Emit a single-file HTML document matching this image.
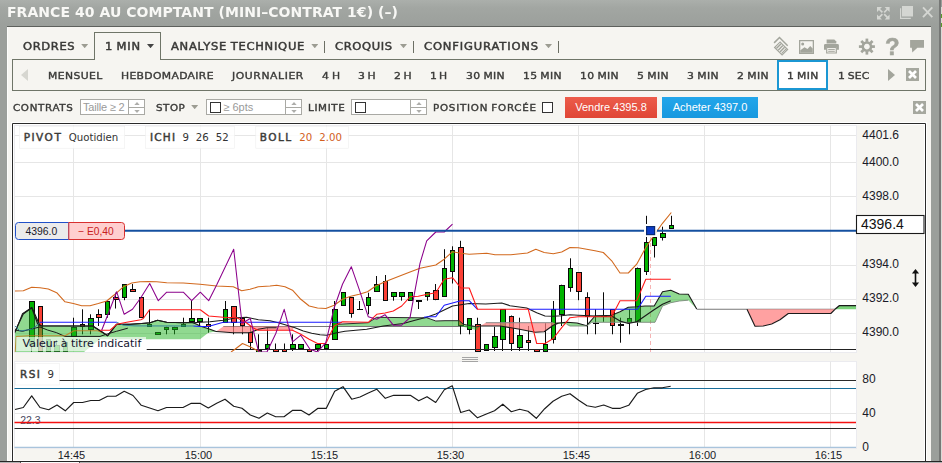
<!DOCTYPE html><html lang="fr"><head><meta charset="utf-8"><title>FRANCE 40 AU COMPTANT</title>
<style>

html,body{margin:0;padding:0}
body{width:942px;height:463px;overflow:hidden;position:relative;background:#9b9f9b;font-family:"Liberation Sans",sans-serif}
.abs{position:absolute}
#titlebar{position:absolute;left:0;top:0;width:939px;height:27px;background:linear-gradient(#abafab 0,#a2a6a2 8px,#9b9f9b 27px)}
#title{position:absolute;left:7.3px;top:2.6px;font-family:"DejaVu Sans","Liberation Sans",sans-serif;font-weight:700;font-size:14px;line-height:18px;color:#f8f8f5;white-space:nowrap;will-change:transform;letter-spacing:0.05px}
#content{position:absolute;left:7px;top:27px;width:924px;height:434px;background:#f6f5f1}
#ctop{position:absolute;left:7px;top:26px;width:924px;height:1px;background:#5d605c}
.lb{position:absolute;font-family:"DejaVu Sans","Liberation Sans",sans-serif;font-weight:400;-webkit-text-stroke:0.45px currentColor;white-space:nowrap;will-change:transform;transform:scaleX(1.10);transform-origin:0 0}
.ar{position:absolute;width:7px;height:4.2px;background:#9c9c92;clip-path:polygon(0 0,100% 0,50% 100%)}
.sep{position:absolute;width:1px;height:12px;background:#6c6f64;top:41px}
.inp{position:absolute;top:99px;height:16px;background:#fff;border:1px solid #a9a9a4;box-sizing:border-box}
.inp i{position:absolute;top:0;bottom:0;width:1px;background:#a9a9a4}
.inp b{position:absolute;top:7px;height:1px;right:0;background:#a9a9a4}
.ph{position:absolute;font-size:12px;line-height:14px;color:#9a9a9a;top:99.6px;white-space:nowrap}
.cb{position:absolute;width:11px;height:11px;box-sizing:border-box;border:1px solid #333;background:#fff;top:102px}
.btn{position:absolute;top:97px;height:21px;color:#fff;font-size:11px;line-height:21px;text-align:center;white-space:nowrap}
.xb{position:absolute;width:13px;height:13px;background:#a6a89f}
.ax{position:absolute;font-size:12px;line-height:14px;color:#1a1a2a;white-space:nowrap}
.tm{position:absolute;font-size:11px;line-height:12px;color:#1a1a2a;top:449px;white-space:nowrap}

</style></head><body>
<div id="titlebar"></div>
<div id="title">FRANCE 40 AU COMPTANT (MINI–CONTRAT 1€) (–)</div>
<div class="abs" style="left:939px;top:0;width:2px;height:463px;background:#767876"></div>
<div class="abs" style="left:941px;top:7px;width:1px;height:456px;background:#d9dbd6"></div>
<div class="abs" style="left:941px;top:14px;width:1px;height:4px;background:#5a9a2a"></div>
<div class="abs" style="left:941px;top:23px;width:1px;height:4px;background:#5a9a2a"></div>
<div id="content"></div><div id="ctop"></div>
<div class="abs" style="left:7px;top:27px;width:1px;height:434px;background:#fdfdfb"></div>
<svg class="abs" style="left:870px;top:0" width="70" height="26" viewBox="870 0 70 26">
<g fill="#d4d6d2" stroke="none">
<path d="M877 7h5L877 12zM889.6 7v5L884.6 7zM877 19.6v-5L882 19.6zM889.6 19.6h-5L889.6 14.6z"/>
<path d="M879 9l3.4 3.4M887.6 9l-3.4 3.4M879 17.6l3.4-3.4M887.6 17.6l-3.4-3.4" stroke="#d4d6d2" stroke-width="1.7" fill="none"/>
<rect x="902" y="6" width="11" height="10.5"/>
<path d="M900 8.3h1.2v9.5h9.6v1.2H900z"/>
</g>
<path d="M923 7.3l9.3 9.8M932.3 7.3l-9.3 9.8" stroke="#d4d6d2" stroke-width="1.9" fill="none"/>
</svg>
<div class="abs" style="left:12px;top:59px;width:914px;height:32px;box-sizing:border-box;border:1px solid #6f7568;background:#f6f5f1"></div>
<div class="abs" style="left:94px;top:32px;width:67px;height:28px;box-sizing:border-box;border:1px solid #6f7568;border-bottom:none;background:#f6f5f1"></div>
<span class="lb" style="left:22.8px;top:41.7px;font-size:10.0px;line-height:10.0px;letter-spacing:0.56px;word-spacing:0px;color:#3a3a38;transform:scaleX(1.15);-webkit-text-stroke-width:0.45px">ORDRES</span>
<div class="ar" style="left:81.2px;top:44px"></div>
<span class="lb" style="left:104.7px;top:41.7px;font-size:10.0px;line-height:10.0px;letter-spacing:0.63px;word-spacing:-0.7px;color:#3a3a38;transform:scaleX(1.15);-webkit-text-stroke-width:0.45px">1 MIN</span>
<div class="ar" style="left:147px;top:44px;background:#444"></div>
<span class="lb" style="left:170.8px;top:41.7px;font-size:10.0px;line-height:10.0px;letter-spacing:0.65px;word-spacing:-0.7px;color:#3a3a38;transform:scaleX(1.15);-webkit-text-stroke-width:0.45px">ANALYSE TECHNIQUE</span>
<div class="ar" style="left:311.3px;top:44px"></div><div class="sep" style="left:324px"></div>
<span class="lb" style="left:335.3px;top:41.7px;font-size:10.0px;line-height:10.0px;letter-spacing:0.57px;word-spacing:0px;color:#3a3a38;transform:scaleX(1.15);-webkit-text-stroke-width:0.45px">CROQUIS</span>
<div class="ar" style="left:400px;top:44px"></div><div class="sep" style="left:413px"></div>
<span class="lb" style="left:424.2px;top:41.7px;font-size:10.0px;line-height:10.0px;letter-spacing:0.75px;word-spacing:0px;color:#3a3a38;transform:scaleX(1.15);-webkit-text-stroke-width:0.45px">CONFIGURATIONS</span>
<div class="ar" style="left:545px;top:44px"></div><div class="sep" style="left:558px"></div>
<svg class="abs" style="left:770px;top:34px" width="160" height="24" viewBox="770 34 160 24">
<g fill="#a3a59c">
<!-- layers -->
<path d="M774.1 42.9L779.5 37.5L787.7 45.7" fill="none" stroke="#a3a59c" stroke-width="1.5"/>
<g transform="translate(781.1 48.5) rotate(45)">
<path fill-rule="evenodd" d="M-5.9-4.5H5.9V4.5H-5.9zM-4.7-3.3V3.3H4.7V-3.3z"/>
<rect x="-4.1" y="-3.3" width="1.5" height="6.6"/><rect x="-1.6" y="-3.3" width="1.5" height="6.6"/><rect x="0.9" y="-3.3" width="1.5" height="6.6"/><rect x="3.3" y="-3.3" width="1.2" height="6.6"/>
</g>
<!-- image -->
<path d="M799 40h15v14h-15zM800.3 41.3v11.4h12.4V41.3z" fill-rule="evenodd"/>
<circle cx="802.7" cy="43.9" r="1.5"/>
<path d="M800.3 52.8v-2.5l4.2-3 3 1.7 2.7-3 2.5 2.6v4.2z"/>
<!-- printer -->
<path d="M826.6 39.5h7.7l2 2V43.4h-9.7z"/>
<path d="M824 45.3q0-1.4 1.4-1.4h12.1q1.4 0 1.4 1.4v4.5h-2v-2.9h-10.9v2.9H824z"/>
<path d="M826.1 46.9h10.8v6.7h-10.8zM827.3 48.1v4.3h8.4v-4.3z" fill-rule="evenodd"/>
<rect x="828.2" y="48.9" width="6.6" height="1"/><rect x="828.2" y="50.8" width="6.6" height="1"/>
<!-- bubble -->
<path d="M910.1 40h13.9v7.7h-6.6l-5.1 4.7-.5-4.7h-1.7z"/>
</g>
<!-- gear -->
<g transform="translate(866.9 46.6)" fill="#a3a59c">
<path fill-rule="evenodd" d="M0-5.4a5.4 5.4 0 1 0 .001 0zM0-2.9a2.9 2.9 0 1 1-.001 0z"/>
<g id="t"><rect x="-1.35" y="-8" width="2.7" height="3.2"/></g>
<use href="#t" transform="rotate(45)"/><use href="#t" transform="rotate(90)"/><use href="#t" transform="rotate(135)"/>
<use href="#t" transform="rotate(180)"/><use href="#t" transform="rotate(225)"/><use href="#t" transform="rotate(270)"/><use href="#t" transform="rotate(315)"/>
</g>

</svg>
<span class="abs" style="left:884.6px;top:34.6px;font-family:'Liberation Sans',sans-serif;font-weight:700;font-size:24px;line-height:24px;color:#a3a59c;-webkit-text-stroke:0.5px #a3a59c;will-change:transform">?</span>
<div class="abs" style="left:21px;top:68.5px;width:0;height:0;border-top:6.5px solid transparent;border-bottom:6.5px solid transparent;border-right:7px solid #d6d6d0"></div>
<span class="lb" style="left:48.3px;top:71.2px;font-size:9.3px;line-height:9.3px;letter-spacing:0.35px;word-spacing:0px;color:#3a3a38;transform:scaleX(1.16);-webkit-text-stroke-width:0.36px">MENSUEL</span>
<span class="lb" style="left:120.8px;top:71.2px;font-size:9.3px;line-height:9.3px;letter-spacing:0.29px;word-spacing:0px;color:#3a3a38;transform:scaleX(1.16);-webkit-text-stroke-width:0.36px">HEBDOMADAIRE</span>
<span class="lb" style="left:231.7px;top:71.2px;font-size:9.3px;line-height:9.3px;letter-spacing:0.51px;word-spacing:0px;color:#3a3a38;transform:scaleX(1.16);-webkit-text-stroke-width:0.36px">JOURNALIER</span>
<span class="lb" style="left:321.7px;top:71.2px;font-size:9.3px;line-height:9.3px;letter-spacing:0.18px;word-spacing:-0.7px;color:#3a3a38;transform:scaleX(1.16);-webkit-text-stroke-width:0.36px">4 H</span>
<span class="lb" style="left:357.8px;top:71.2px;font-size:9.3px;line-height:9.3px;letter-spacing:0.05px;word-spacing:-0.7px;color:#3a3a38;transform:scaleX(1.16);-webkit-text-stroke-width:0.36px">3 H</span>
<span class="lb" style="left:393.8px;top:71.2px;font-size:9.3px;line-height:9.3px;letter-spacing:-0.04px;word-spacing:-0.7px;color:#3a3a38;transform:scaleX(1.16);-webkit-text-stroke-width:0.36px">2 H</span>
<span class="lb" style="left:430.3px;top:71.2px;font-size:9.3px;line-height:9.3px;letter-spacing:-0.17px;word-spacing:-0.7px;color:#3a3a38;transform:scaleX(1.16);-webkit-text-stroke-width:0.36px">1 H</span>
<span class="lb" style="left:465.8px;top:71.2px;font-size:9.3px;line-height:9.3px;letter-spacing:0.31px;word-spacing:-0.7px;color:#3a3a38;transform:scaleX(1.16);-webkit-text-stroke-width:0.36px">30 MIN</span>
<span class="lb" style="left:522.8px;top:71.2px;font-size:9.3px;line-height:9.3px;letter-spacing:0.27px;word-spacing:-0.7px;color:#3a3a38;transform:scaleX(1.16);-webkit-text-stroke-width:0.36px">15 MIN</span>
<span class="lb" style="left:580.0px;top:71.2px;font-size:9.3px;line-height:9.3px;letter-spacing:0.31px;word-spacing:-0.7px;color:#3a3a38;transform:scaleX(1.16);-webkit-text-stroke-width:0.36px">10 MIN</span>
<span class="lb" style="left:636.7px;top:71.2px;font-size:9.3px;line-height:9.3px;letter-spacing:0.34px;word-spacing:-0.7px;color:#3a3a38;transform:scaleX(1.16);-webkit-text-stroke-width:0.36px">5 MIN</span>
<span class="lb" style="left:686.7px;top:71.2px;font-size:9.3px;line-height:9.3px;letter-spacing:0.34px;word-spacing:-0.7px;color:#3a3a38;transform:scaleX(1.16);-webkit-text-stroke-width:0.36px">3 MIN</span>
<span class="lb" style="left:736.7px;top:71.2px;font-size:9.3px;line-height:9.3px;letter-spacing:0.34px;word-spacing:-0.7px;color:#3a3a38;transform:scaleX(1.16);-webkit-text-stroke-width:0.36px">2 MIN</span>
<div class="abs" style="left:777px;top:60px;width:51px;height:30px;box-sizing:border-box;border:2px solid #1b97d3;background:#fff"></div>
<span class="lb" style="left:787.0px;top:71.2px;font-size:9.3px;line-height:9.3px;letter-spacing:0.27px;word-spacing:-0.7px;color:#3a3a38;transform:scaleX(1.16);-webkit-text-stroke-width:0.36px">1 MIN</span>
<span class="lb" style="left:837.5px;top:71.2px;font-size:9.3px;line-height:9.3px;letter-spacing:0.11px;word-spacing:-0.7px;color:#3a3a38;transform:scaleX(1.16);-webkit-text-stroke-width:0.36px">1 SEC</span>
<div class="abs" style="left:888.3px;top:68.5px;width:0;height:0;border-top:6.5px solid transparent;border-bottom:6.5px solid transparent;border-left:7px solid #a3a59c"></div>
<svg class="abs" style="left:906px;top:68px" width="13" height="13" viewBox="0 0 13 13"><rect width="13" height="13" fill="#a6a89f"/><path d="M3 3l7 7M10 3l-7 7" stroke="#fff" stroke-width="2.7"/></svg>
<svg class="abs" style="left:913px;top:101px" width="13" height="13" viewBox="0 0 13 13"><rect width="13" height="13" fill="#a6a89f"/><path d="M3 3l7 7M10 3l-7 7" stroke="#fff" stroke-width="2.7"/></svg>
<span class="lb" style="left:13.3px;top:104.2px;font-size:8.9px;line-height:8.9px;letter-spacing:0.59px;word-spacing:0px;color:#3a3a38;transform:scaleX(1.16);-webkit-text-stroke-width:0.36px">CONTRATS</span>
<div class="inp" style="left:80px;width:65px"><i style="left:47px"></i><b style="left:48px"></b></div>
<span class="ph" style="left:83px;font-size:11px;letter-spacing:-0.2px">Taille ≥ 2</span>
<span class="lb" style="left:156.2px;top:104.2px;font-size:8.9px;line-height:8.9px;letter-spacing:0.46px;word-spacing:0px;color:#3a3a38;transform:scaleX(1.16);-webkit-text-stroke-width:0.36px">STOP</span>
<div class="ar" style="left:191.2px;top:105px"></div>
<div class="inp" style="left:206px;width:96px"><i style="left:78px"></i><b style="left:79px"></b></div>
<div class="cb" style="left:210px"></div><span class="ph" style="left:223.3px;font-size:11px">≥ 6pts</span>
<span class="lb" style="left:307.8px;top:104.2px;font-size:8.9px;line-height:8.9px;letter-spacing:0.57px;word-spacing:0px;color:#3a3a38;transform:scaleX(1.16);-webkit-text-stroke-width:0.36px">LIMITE</span>
<div class="inp" style="left:351px;width:76px"><i style="left:58px"></i><b style="left:59px"></b></div>
<div class="cb" style="left:355px"></div>
<span class="lb" style="left:432.8px;top:104.2px;font-size:8.9px;line-height:8.9px;letter-spacing:0.66px;word-spacing:-0.7px;color:#3a3a38;transform:scaleX(1.16);-webkit-text-stroke-width:0.36px">POSITION FORCÉE</span>
<div class="cb" style="left:542px"></div>
<svg class="abs" style="left:132.5px;top:100px" width="8" height="14" viewBox="0 0 8 14"><path d="M4 2l2.7 2.9H1.3zM4 12.9l2.7-2.9H1.3z" fill="#adadaa"/></svg>
<svg class="abs" style="left:289.5px;top:100px" width="8" height="14" viewBox="0 0 8 14"><path d="M4 2l2.7 2.9H1.3zM4 12.9l2.7-2.9H1.3z" fill="#adadaa"/></svg>
<svg class="abs" style="left:414.5px;top:100px" width="8" height="14" viewBox="0 0 8 14"><path d="M4 2l2.7 2.9H1.3zM4 12.9l2.7-2.9H1.3z" fill="#adadaa"/></svg>
<div class="btn" style="left:565px;width:92px;background:linear-gradient(#ec5c4b,#e04636)">Vendre 4395.8</div>
<div class="btn" style="left:662px;width:96px;background:linear-gradient(#22a6ea,#1898df)">Acheter 4397.0</div>
<svg class="abs" style="left:0;top:0" width="942" height="463" viewBox="0 0 942 463" font-family="Liberation Sans,sans-serif">
<defs><clipPath id="cm"><rect x="14.5" y="124.0" width="841.5" height="228.0"/></clipPath></defs>
<rect x="12" y="123" width="914" height="345" fill="#f6f5f1"/>
<rect x="13" y="124" width="843.5" height="228.5" fill="#fff"/>
<rect x="14.5" y="125.5" width="842" height="227" fill="#fff" stroke="#ebebef" stroke-width="1"/>
<rect x="13" y="361" width="843.5" height="87" fill="#fff"/>
<rect x="14.5" y="361.5" width="842" height="87" fill="#fff" stroke="#ebebef" stroke-width="1"/>
<line x1="73.5" x2="73.5" y1="124.0" y2="352.0" stroke="#e6e6e6" stroke-width="1"/>
<line x1="73.5" x2="73.5" y1="361.5" y2="447.5" stroke="#e6e6e6" stroke-width="1"/>
<line x1="200.5" x2="200.5" y1="124.0" y2="352.0" stroke="#e6e6e6" stroke-width="1"/>
<line x1="200.5" x2="200.5" y1="361.5" y2="447.5" stroke="#e6e6e6" stroke-width="1"/>
<line x1="326.5" x2="326.5" y1="124.0" y2="352.0" stroke="#e6e6e6" stroke-width="1"/>
<line x1="326.5" x2="326.5" y1="361.5" y2="447.5" stroke="#e6e6e6" stroke-width="1"/>
<line x1="452.5" x2="452.5" y1="124.0" y2="352.0" stroke="#e6e6e6" stroke-width="1"/>
<line x1="452.5" x2="452.5" y1="361.5" y2="447.5" stroke="#e6e6e6" stroke-width="1"/>
<line x1="578.5" x2="578.5" y1="124.0" y2="352.0" stroke="#e6e6e6" stroke-width="1"/>
<line x1="578.5" x2="578.5" y1="361.5" y2="447.5" stroke="#e6e6e6" stroke-width="1"/>
<line x1="704.5" x2="704.5" y1="124.0" y2="352.0" stroke="#e6e6e6" stroke-width="1"/>
<line x1="704.5" x2="704.5" y1="361.5" y2="447.5" stroke="#e6e6e6" stroke-width="1"/>
<line x1="830.5" x2="830.5" y1="124.0" y2="352.0" stroke="#e6e6e6" stroke-width="1"/>
<line x1="830.5" x2="830.5" y1="361.5" y2="447.5" stroke="#e6e6e6" stroke-width="1"/>
<line x1="14.5" x2="856.0" y1="135.5" y2="135.5" stroke="#e6e6e6" stroke-width="1"/>
<line x1="14.5" x2="856.0" y1="162.5" y2="162.5" stroke="#e6e6e6" stroke-width="1"/>
<line x1="14.5" x2="856.0" y1="196.5" y2="196.5" stroke="#e6e6e6" stroke-width="1"/>
<line x1="14.5" x2="856.0" y1="230.5" y2="230.5" stroke="#e6e6e6" stroke-width="1"/>
<line x1="14.5" x2="856.0" y1="265.5" y2="265.5" stroke="#e6e6e6" stroke-width="1"/>
<line x1="14.5" x2="856.0" y1="299.5" y2="299.5" stroke="#e6e6e6" stroke-width="1"/>
<line x1="14.5" x2="856.0" y1="333.5" y2="333.5" stroke="#e6e6e6" stroke-width="1"/>
<line x1="14.5" x2="856.0" y1="413.5" y2="413.5" stroke="#e6e6e6" stroke-width="1"/>
<line x1="14.5" x2="856.0" y1="447.3" y2="447.3" stroke="#a9c4dc" stroke-width="1.2"/>
<path d="M12.5 463V123.5H925.5V463" fill="none" stroke="#fff" stroke-width="3"/><path d="M12.5 463V123.5H925.5V463" fill="none" stroke="#2a2a2a" stroke-width="1"/>
<rect x="462" y="357" width="16" height="1" fill="#a4a4a4"/>
<rect x="462" y="359" width="16" height="1" fill="#a4a4a4"/>
<rect x="462" y="361" width="16" height="1" fill="#a4a4a4"/>
<g clip-path="url(#cm)">
<line x1="223.3" x2="480" y1="326.5" y2="326.5" stroke="#777" stroke-width="1"/>
<line x1="696.7" x2="835" y1="309.3" y2="309.3" stroke="#777" stroke-width="1.1"/>
<line x1="650.5" x2="650.5" y1="236" y2="352" stroke="#f6b4b4" stroke-width="1" stroke-dasharray="4 3"/>
<rect x="31" y="301.3" width="1" height="50.7" fill="#0a0a0a"/>
<rect x="40" y="306.3" width="1" height="45.7" fill="#0a0a0a"/>
<rect x="48" y="339.0" width="1" height="13.0" fill="#0a0a0a"/>
<rect x="56" y="340.0" width="1" height="12.0" fill="#0a0a0a"/>
<rect x="65" y="342.0" width="1" height="10.0" fill="#0a0a0a"/>
<rect x="73" y="317.7" width="1" height="19.1" fill="#0a0a0a"/>
<rect x="82" y="309.3" width="1" height="25.0" fill="#0a0a0a"/>
<rect x="90" y="314.3" width="1" height="20.0" fill="#0a0a0a"/>
<rect x="98" y="309.3" width="1" height="16.7" fill="#0a0a0a"/>
<rect x="107" y="301.3" width="1" height="16.4" fill="#0a0a0a"/>
<rect x="115" y="292.7" width="1" height="15.8" fill="#0a0a0a"/>
<rect x="124" y="284.0" width="1" height="16.2" fill="#0a0a0a"/>
<rect x="132" y="284.0" width="1" height="7.3" fill="#0a0a0a"/>
<rect x="141" y="297.3" width="1" height="20.0" fill="#0a0a0a"/>
<rect x="149" y="309.8" width="1" height="15.4" fill="#0a0a0a"/>
<rect x="157" y="332.3" width="1" height="2.4" fill="#0a0a0a"/>
<rect x="166" y="326.8" width="1" height="7.5" fill="#0a0a0a"/>
<rect x="174" y="326.8" width="1" height="7.5" fill="#0a0a0a"/>
<rect x="183" y="317.7" width="1" height="7.5" fill="#0a0a0a"/>
<rect x="191" y="300.7" width="1" height="21.1" fill="#0a0a0a"/>
<rect x="199" y="318.5" width="1" height="7.5" fill="#0a0a0a"/>
<rect x="208" y="317.7" width="1" height="15.0" fill="#0a0a0a"/>
<rect x="225" y="301.0" width="1" height="21.3" fill="#0a0a0a"/>
<rect x="233" y="306.3" width="1" height="28.0" fill="#0a0a0a"/>
<rect x="242" y="317.7" width="1" height="16.6" fill="#0a0a0a"/>
<rect x="250" y="326.0" width="1" height="23.3" fill="#0a0a0a"/>
<rect x="258" y="334.3" width="1" height="17.7" fill="#0a0a0a"/>
<rect x="267" y="327.7" width="1" height="23.3" fill="#0a0a0a"/>
<rect x="275" y="343.5" width="1" height="8.5" fill="#0a0a0a"/>
<rect x="284" y="343.5" width="1" height="8.5" fill="#0a0a0a"/>
<rect x="292" y="334.3" width="1" height="16.7" fill="#0a0a0a"/>
<rect x="300" y="344.3" width="1" height="4.2" fill="#0a0a0a"/>
<rect x="309" y="349.3" width="1" height="1.7" fill="#0a0a0a"/>
<rect x="317" y="344.3" width="1" height="6.7" fill="#0a0a0a"/>
<rect x="326" y="344.3" width="1" height="4.2" fill="#0a0a0a"/>
<rect x="334" y="301.0" width="1" height="38.3" fill="#0a0a0a"/>
<rect x="343" y="292.3" width="1" height="13.4" fill="#0a0a0a"/>
<rect x="351" y="297.3" width="1" height="20.4" fill="#0a0a0a"/>
<rect x="359" y="301.0" width="1" height="8.8" fill="#0a0a0a"/>
<rect x="368" y="292.7" width="1" height="21.6" fill="#0a0a0a"/>
<rect x="376" y="276.0" width="1" height="15.3" fill="#0a0a0a"/>
<rect x="385" y="275.0" width="1" height="25.7" fill="#0a0a0a"/>
<rect x="393" y="292.3" width="1" height="8.4" fill="#0a0a0a"/>
<rect x="401" y="292.3" width="1" height="8.4" fill="#0a0a0a"/>
<rect x="410" y="292.3" width="1" height="8.4" fill="#0a0a0a"/>
<rect x="418" y="300.5" width="1" height="8.5" fill="#0a0a0a"/>
<rect x="427" y="292.3" width="1" height="8.4" fill="#0a0a0a"/>
<rect x="435" y="284.0" width="1" height="16.2" fill="#0a0a0a"/>
<rect x="444" y="249.2" width="1" height="47.1" fill="#0a0a0a"/>
<rect x="452" y="246.3" width="1" height="37.2" fill="#0a0a0a"/>
<rect x="460" y="240.8" width="1" height="93.5" fill="#0a0a0a"/>
<rect x="469" y="318.5" width="1" height="15.8" fill="#0a0a0a"/>
<rect x="477" y="317.7" width="1" height="34.3" fill="#0a0a0a"/>
<rect x="486" y="344.3" width="1" height="6.7" fill="#0a0a0a"/>
<rect x="494" y="326.8" width="1" height="24.2" fill="#0a0a0a"/>
<rect x="502" y="309.3" width="1" height="41.7" fill="#0a0a0a"/>
<rect x="511" y="315.5" width="1" height="35.5" fill="#0a0a0a"/>
<rect x="519" y="317.7" width="1" height="33.3" fill="#0a0a0a"/>
<rect x="528" y="326.0" width="1" height="25.0" fill="#0a0a0a"/>
<rect x="536" y="349.3" width="1" height="2.7" fill="#0a0a0a"/>
<rect x="545" y="323.2" width="1" height="28.8" fill="#0a0a0a"/>
<rect x="553" y="301.0" width="1" height="42.5" fill="#0a0a0a"/>
<rect x="561" y="284.7" width="1" height="41.3" fill="#0a0a0a"/>
<rect x="570" y="258.3" width="1" height="33.5" fill="#0a0a0a"/>
<rect x="578" y="272.5" width="1" height="27.7" fill="#0a0a0a"/>
<rect x="587" y="292.3" width="1" height="42.0" fill="#0a0a0a"/>
<rect x="595" y="309.3" width="1" height="25.0" fill="#0a0a0a"/>
<rect x="603" y="292.3" width="1" height="29.5" fill="#0a0a0a"/>
<rect x="612" y="309.3" width="1" height="25.0" fill="#0a0a0a"/>
<rect x="620" y="317.7" width="1" height="25.0" fill="#0a0a0a"/>
<rect x="629" y="309.3" width="1" height="25.0" fill="#0a0a0a"/>
<rect x="637" y="267.5" width="1" height="58.5" fill="#0a0a0a"/>
<rect x="646" y="215.8" width="1" height="59.2" fill="#0a0a0a"/>
<rect x="654" y="237.0" width="1" height="20.5" fill="#0a0a0a"/>
<rect x="662" y="226.7" width="1" height="13.8" fill="#0a0a0a"/>
<rect x="671" y="215.8" width="1" height="12.5" fill="#0a0a0a"/>
<rect x="29" y="301" width="6" height="45" fill="#0a0a0a"/>
<rect x="30" y="302" width="4" height="43" fill="#00b400"/>
<rect x="38" y="306" width="5" height="46" fill="#0a0a0a"/>
<rect x="39" y="307" width="3" height="44" fill="#fb4035"/>
<rect x="46" y="339" width="5" height="13" fill="#0a0a0a"/>
<rect x="47" y="340" width="3" height="11" fill="#00b400"/>
<rect x="54" y="345" width="6" height="7" fill="#0a0a0a"/>
<rect x="55" y="346" width="4" height="5" fill="#00b400"/>
<rect x="63" y="342" width="5" height="10" fill="#0a0a0a"/>
<rect x="64" y="343" width="3" height="8" fill="#00b400"/>
<rect x="71" y="327" width="6" height="10" fill="#0a0a0a"/>
<rect x="72" y="328" width="4" height="8" fill="#00b400"/>
<rect x="80" y="324" width="5" height="3" fill="#0a0a0a"/>
<rect x="81" y="325" width="3" height="1" fill="#fb4035"/>
<rect x="88" y="318" width="6" height="12" fill="#0a0a0a"/>
<rect x="89" y="319" width="4" height="10" fill="#00b400"/>
<rect x="96" y="314" width="6" height="4" fill="#0a0a0a"/>
<rect x="97" y="315" width="4" height="2" fill="#fb4035"/>
<rect x="105" y="301" width="5" height="14" fill="#0a0a0a"/>
<rect x="106" y="302" width="3" height="12" fill="#00b400"/>
<rect x="113" y="297" width="6" height="3" fill="#0a0a0a"/>
<rect x="114" y="298" width="4" height="1" fill="#fb4035"/>
<rect x="122" y="284" width="5" height="14" fill="#0a0a0a"/>
<rect x="123" y="285" width="3" height="12" fill="#00b400"/>
<rect x="130" y="289" width="6" height="3" fill="#0a0a0a"/>
<rect x="131" y="290" width="4" height="1" fill="#fb4035"/>
<rect x="139" y="297" width="5" height="21" fill="#0a0a0a"/>
<rect x="140" y="298" width="3" height="19" fill="#fb4035"/>
<rect x="147" y="324" width="5" height="3" fill="#0a0a0a"/>
<rect x="148" y="325" width="3" height="1" fill="#00b400"/>
<rect x="155" y="332" width="6" height="3" fill="#0a0a0a"/>
<rect x="156" y="333" width="4" height="1" fill="#00b400"/>
<rect x="164" y="327" width="5" height="3" fill="#0a0a0a"/>
<rect x="165" y="328" width="3" height="1" fill="#00b400"/>
<rect x="172" y="327" width="6" height="3" fill="#0a0a0a"/>
<rect x="173" y="328" width="4" height="1" fill="#00b400"/>
<rect x="181" y="324" width="5" height="3" fill="#0a0a0a"/>
<rect x="182" y="325" width="3" height="1" fill="#00b400"/>
<rect x="189" y="318" width="6" height="4" fill="#0a0a0a"/>
<rect x="190" y="319" width="4" height="2" fill="#00b400"/>
<rect x="197" y="318" width="6" height="4" fill="#0a0a0a"/>
<rect x="198" y="319" width="4" height="2" fill="#00b400"/>
<rect x="206" y="324" width="5" height="3" fill="#0a0a0a"/>
<rect x="207" y="325" width="3" height="1" fill="#fb4035"/>
<rect x="223" y="309" width="5" height="14" fill="#0a0a0a"/>
<rect x="224" y="310" width="3" height="12" fill="#00b400"/>
<rect x="231" y="306" width="6" height="17" fill="#0a0a0a"/>
<rect x="232" y="307" width="4" height="15" fill="#fb4035"/>
<rect x="240" y="318" width="5" height="8" fill="#0a0a0a"/>
<rect x="241" y="319" width="3" height="6" fill="#fb4035"/>
<rect x="248" y="332" width="5" height="11" fill="#0a0a0a"/>
<rect x="249" y="333" width="3" height="9" fill="#fb4035"/>
<rect x="256" y="350" width="6" height="3" fill="#0a0a0a"/>
<rect x="257" y="351" width="4" height="1" fill="#00b400"/>
<rect x="265" y="344" width="5" height="5" fill="#0a0a0a"/>
<rect x="266" y="345" width="3" height="3" fill="#00b400"/>
<rect x="273" y="349" width="6" height="3" fill="#0a0a0a"/>
<rect x="274" y="350" width="4" height="1" fill="#fb4035"/>
<rect x="282" y="349" width="5" height="3" fill="#0a0a0a"/>
<rect x="283" y="350" width="3" height="1" fill="#fb4035"/>
<rect x="290" y="344" width="6" height="5" fill="#0a0a0a"/>
<rect x="291" y="345" width="4" height="3" fill="#00b400"/>
<rect x="298" y="344" width="6" height="5" fill="#0a0a0a"/>
<rect x="299" y="345" width="4" height="3" fill="#00b400"/>
<rect x="307" y="349" width="5" height="3" fill="#0a0a0a"/>
<rect x="308" y="350" width="3" height="1" fill="#fb4035"/>
<rect x="315" y="344" width="6" height="5" fill="#0a0a0a"/>
<rect x="316" y="345" width="4" height="3" fill="#00b400"/>
<rect x="324" y="344" width="5" height="5" fill="#0a0a0a"/>
<rect x="325" y="345" width="3" height="3" fill="#00b400"/>
<rect x="332" y="309" width="6" height="31" fill="#0a0a0a"/>
<rect x="333" y="310" width="4" height="29" fill="#00b400"/>
<rect x="341" y="292" width="5" height="14" fill="#0a0a0a"/>
<rect x="342" y="293" width="3" height="12" fill="#00b400"/>
<rect x="349" y="297" width="5" height="17" fill="#0a0a0a"/>
<rect x="350" y="298" width="3" height="15" fill="#fb4035"/>
<rect x="357" y="309" width="6" height="1" fill="#0a0a0a"/>
<rect x="366" y="297" width="5" height="9" fill="#0a0a0a"/>
<rect x="367" y="298" width="3" height="7" fill="#00b400"/>
<rect x="374" y="284" width="6" height="8" fill="#0a0a0a"/>
<rect x="375" y="285" width="4" height="6" fill="#00b400"/>
<rect x="383" y="281" width="5" height="20" fill="#0a0a0a"/>
<rect x="384" y="282" width="3" height="18" fill="#fb4035"/>
<rect x="391" y="292" width="6" height="5" fill="#0a0a0a"/>
<rect x="392" y="293" width="4" height="3" fill="#00b400"/>
<rect x="399" y="292" width="6" height="5" fill="#0a0a0a"/>
<rect x="400" y="293" width="4" height="3" fill="#00b400"/>
<rect x="408" y="292" width="5" height="9" fill="#0a0a0a"/>
<rect x="409" y="293" width="3" height="7" fill="#00b400"/>
<rect x="416" y="300" width="6" height="2" fill="#0a0a0a"/>
<rect x="425" y="292" width="5" height="5" fill="#0a0a0a"/>
<rect x="426" y="293" width="3" height="3" fill="#00b400"/>
<rect x="433" y="290" width="6" height="10" fill="#0a0a0a"/>
<rect x="434" y="291" width="4" height="8" fill="#fb4035"/>
<rect x="442" y="268" width="5" height="29" fill="#0a0a0a"/>
<rect x="443" y="269" width="3" height="27" fill="#00b400"/>
<rect x="450" y="250" width="5" height="22" fill="#0a0a0a"/>
<rect x="451" y="251" width="3" height="20" fill="#00b400"/>
<rect x="458" y="247" width="6" height="79" fill="#0a0a0a"/>
<rect x="459" y="248" width="4" height="77" fill="#fb4035"/>
<rect x="467" y="318" width="5" height="12" fill="#0a0a0a"/>
<rect x="468" y="319" width="3" height="10" fill="#00b400"/>
<rect x="475" y="324" width="6" height="28" fill="#0a0a0a"/>
<rect x="476" y="325" width="4" height="26" fill="#fb4035"/>
<rect x="484" y="344" width="5" height="7" fill="#0a0a0a"/>
<rect x="485" y="345" width="3" height="5" fill="#00b400"/>
<rect x="492" y="336" width="6" height="12" fill="#0a0a0a"/>
<rect x="493" y="337" width="4" height="10" fill="#00b400"/>
<rect x="500" y="309" width="6" height="31" fill="#0a0a0a"/>
<rect x="501" y="310" width="4" height="29" fill="#00b400"/>
<rect x="509" y="316" width="5" height="28" fill="#0a0a0a"/>
<rect x="510" y="317" width="3" height="26" fill="#fb4035"/>
<rect x="517" y="335" width="6" height="13" fill="#0a0a0a"/>
<rect x="518" y="336" width="4" height="11" fill="#00b400"/>
<rect x="526" y="340" width="5" height="3" fill="#0a0a0a"/>
<rect x="527" y="341" width="3" height="1" fill="#fb4035"/>
<rect x="534" y="349" width="6" height="3" fill="#0a0a0a"/>
<rect x="535" y="350" width="4" height="1" fill="#fb4035"/>
<rect x="543" y="344" width="5" height="8" fill="#0a0a0a"/>
<rect x="544" y="345" width="3" height="6" fill="#00b400"/>
<rect x="551" y="309" width="5" height="31" fill="#0a0a0a"/>
<rect x="552" y="310" width="3" height="29" fill="#00b400"/>
<rect x="559" y="285" width="6" height="30" fill="#0a0a0a"/>
<rect x="560" y="286" width="4" height="28" fill="#00b400"/>
<rect x="568" y="268" width="5" height="20" fill="#0a0a0a"/>
<rect x="569" y="269" width="3" height="18" fill="#00b400"/>
<rect x="576" y="272" width="6" height="20" fill="#0a0a0a"/>
<rect x="577" y="273" width="4" height="18" fill="#fb4035"/>
<rect x="585" y="297" width="5" height="20" fill="#0a0a0a"/>
<rect x="586" y="298" width="3" height="18" fill="#fb4035"/>
<rect x="593" y="323" width="6" height="1" fill="#0a0a0a"/>
<rect x="601" y="316" width="6" height="1" fill="#0a0a0a"/>
<rect x="610" y="309" width="5" height="17" fill="#0a0a0a"/>
<rect x="611" y="310" width="3" height="15" fill="#fb4035"/>
<rect x="618" y="324" width="6" height="2" fill="#0a0a0a"/>
<rect x="627" y="318" width="5" height="5" fill="#0a0a0a"/>
<rect x="628" y="319" width="3" height="3" fill="#00b400"/>
<rect x="635" y="268" width="6" height="54" fill="#0a0a0a"/>
<rect x="636" y="269" width="4" height="52" fill="#00b400"/>
<rect x="644" y="242" width="5" height="30" fill="#0a0a0a"/>
<rect x="645" y="243" width="3" height="28" fill="#00b400"/>
<rect x="652" y="237" width="5" height="9" fill="#0a0a0a"/>
<rect x="653" y="238" width="3" height="7" fill="#00b400"/>
<rect x="660" y="233" width="6" height="5" fill="#0a0a0a"/>
<rect x="661" y="234" width="4" height="3" fill="#00b400"/>
<rect x="669" y="225" width="5" height="4" fill="#0a0a0a"/>
<rect x="670" y="226" width="3" height="2" fill="#00b400"/>
<line x1="146.7" x2="856" y1="349.5" y2="349.5" stroke="#222" stroke-width="1"/>
<polygon points="15.0,332.6 22.5,313.8 31.9,307.5 40.0,325.7 92.7,326.0 100.2,330.7 107.7,335.7 116.5,324.4 130.0,324.3 141.7,323.5 150.0,322.7 157.5,320.2 166.7,322.3 183.3,322.7 191.7,322.3 196.7,324.3 200.0,326.0 210.0,329.3 216.0,331.5 216.0,331.5 208.3,332.7 200.0,339.3 100.0,339.3 84.0,352.0 15.0,352.0" fill="#22b422" fill-opacity="0.5"/>
<polygon points="216.0,331.5 223.3,326.5 293.3,326.5 293.3,330.2 258.3,330.2 250.0,332.7 233.3,332.7 220.0,331.8" fill="#ff8080" fill-opacity="0.7"/>
<polygon points="336.7,324.3 353.0,323.5 368.3,322.7 376.7,317.3 420.0,317.8 426.7,317.7 435.8,321.0 445.0,320.7 459.2,320.7 463.3,324.3 476.7,326.8 480.0,326.0 476.7,330.2 463.3,326.8 460.0,326.0 336.7,326.0" fill="#22b422" fill-opacity="0.5"/>
<polygon points="480.0,326.0 485.8,322.7 553.3,322.7 555.0,323.4 553.3,325.2 544.2,331.8 535.0,332.3 518.3,329.0 500.0,326.0" fill="#ff8080" fill-opacity="0.7"/>
<polygon points="555.0,323.4 566.7,322.3 577.0,323.0 586.7,325.7 595.0,316.0 611.7,315.2 620.0,311.8 628.3,307.3 636.7,306.8 645.0,306.0 654.2,306.0 662.5,291.8 670.8,290.2 679.2,294.0 688.3,294.3 696.7,309.0 688.3,300.2 679.2,301.0 670.8,302.7 662.5,306.0 655.0,322.3 591.7,322.3 586.7,326.0 570.0,326.0 566.7,324.3" fill="#22b422" fill-opacity="0.5"/>
<polygon points="747.0,309.3 755.0,326.3 763.3,326.0 771.7,324.0 780.0,319.7 788.3,313.5 830.8,313.5 835.0,309.3" fill="#ff9090" fill-opacity="0.85"/>
<polygon points="835.0,309.3 839.2,305.7 856.0,305.7 856.0,309.3" fill="#22b422" fill-opacity="0.6"/>
<polyline points="15.0,332.6 22.5,313.8 31.9,307.5 40.0,325.7 92.7,326.0 100.2,330.7 107.7,335.7 116.5,324.4 130.0,324.3 141.7,323.5 150.0,322.7 157.5,320.2 166.7,322.3 183.3,322.7 191.7,322.3 196.7,324.3 200.0,326.0 210.0,329.3 216.0,331.5" fill="none" stroke="#1a1a1a" stroke-width="1.1" stroke-linejoin="round" />
<polyline points="15.0,330.0 22.5,331.3 31.9,328.8 40.0,327.0 47.5,330.0 56.3,332.6 65.0,336.4 100.0,336.4 107.7,333.8 116.5,331.3 127.8,328.2" fill="none" stroke="#1a1a1a" stroke-width="1.0" stroke-linejoin="round" />
<polyline points="216.0,331.5 220.0,331.8 233.3,332.7 250.0,332.7 258.3,329.3 266.7,327.7 276.7,327.7" fill="none" stroke="#1a1a1a" stroke-width="1.1" stroke-linejoin="round" />
<polyline points="336.7,324.3 353.0,323.5 368.3,322.7 376.7,317.3 420.0,317.8 426.7,317.7 435.8,321.0 445.0,320.7 459.2,320.7 463.3,324.3 476.7,326.8 480.0,326.0" fill="none" stroke="#2a2a2a" stroke-width="1.0" stroke-linejoin="round" />
<polyline points="480.0,326.0 500.0,326.0 518.3,329.0 535.0,332.3 544.2,331.8 553.3,325.2 558.3,323.2" fill="none" stroke="#1a1a1a" stroke-width="1.1" stroke-linejoin="round" />
<polyline points="485.8,322.7 553.3,322.7" fill="none" stroke="#888" stroke-width="1.0" stroke-linejoin="round" />
<polyline points="555.0,323.4 566.7,322.3 577.0,323.0 586.7,325.7 595.0,316.0 611.7,315.2 620.0,311.8 628.3,307.3 636.7,306.8 645.0,306.0 654.2,306.0 662.5,291.8 670.8,290.2 679.2,294.0 688.3,294.3 696.7,309.0" fill="none" stroke="#1a1a1a" stroke-width="1.1" stroke-linejoin="round" />
<polyline points="566.7,324.3 570.0,326.0 586.7,326.0 591.7,322.3 655.0,322.3 662.5,306.0 670.8,302.7 679.2,301.0 688.3,300.2" fill="none" stroke="#7a8a7a" stroke-width="0.9" stroke-linejoin="round" />
<polyline points="747.0,309.3 755.0,326.3 763.3,326.0 771.7,324.0 780.0,319.7 788.3,313.5 830.8,313.5 835.0,309.3" fill="none" stroke="#1a1a1a" stroke-width="1.1" stroke-linejoin="round" />
<polyline points="835.0,309.3 839.2,305.7 856.0,305.7" fill="none" stroke="#1a1a1a" stroke-width="1.3" stroke-linejoin="round" />
<polyline points="15.0,291.0 23.3,290.7 31.7,287.3 40.0,287.7 48.3,289.0 56.7,292.7 65.0,301.8 73.3,303.5 81.7,305.7 90.0,305.7 98.3,303.5 106.7,301.0 115.0,294.3 123.3,286.8 131.7,283.0 140.0,281.8 148.3,281.5 156.7,281.8 166.7,282.7 183.3,283.0 200.0,284.3 216.7,286.0 233.3,286.8 241.7,290.7 250.0,289.3 258.3,286.8 270.0,286.0 276.7,285.2 285.0,286.8 292.5,290.2 300.8,299.3 309.2,306.0 317.5,308.0 325.8,308.5 334.2,305.2 342.5,299.3 350.8,296.3 359.2,294.3 367.5,291.8 375.8,286.0 385.0,281.8 393.3,278.5 401.0,275.5 410.0,272.0 420.0,268.3 435.8,265.0 444.2,259.2 452.5,251.7 460.8,253.3 469.2,254.2 486.7,253.3 495.0,254.7 510.8,254.7 527.5,253.0 535.8,249.2 544.2,252.5 553.3,253.7 561.7,252.0 570.0,247.5 578.3,247.8 586.7,249.2 595.0,250.8 603.3,252.5 611.7,260.8 620.0,273.0 628.3,273.0 636.7,264.2 645.8,247.5 654.2,235.0 662.5,223.3 671.3,212.5" fill="none" stroke="#d2691e" stroke-width="1.1" stroke-linejoin="round" />
<polyline points="15.0,352.0 16.5,336.5 28.8,335.7 65.0,335.7 74.0,330.7 97.7,330.7 102.0,332.5" fill="none" stroke="#c8781e" stroke-width="1.1" stroke-linejoin="round" opacity="0.8"/>
<polyline points="231.0,352.0 235.0,349.3 242.5,343.5 250.0,346.8 258.3,351.0 260.0,352.0" fill="none" stroke="#d2691e" stroke-width="1.1" stroke-linejoin="round" />
<polyline points="15.0,331.3 23.3,314.0 31.7,307.7 37.5,323.5 41.7,326.0 92.7,326.0 100.0,330.7 107.7,335.7 116.5,324.4 130.0,324.3 141.7,323.5 150.0,322.7 157.5,320.2 166.7,322.3 183.3,322.7 191.7,322.7 210.0,321.8 223.3,320.2 236.7,317.7 246.7,317.3 258.3,319.7 270.0,320.7 278.3,322.7 286.7,325.2 295.0,327.7 303.3,331.0 311.7,333.2 320.0,334.7 326.7,335.2 336.7,332.7 345.0,331.3 366.7,329.3 383.3,326.0 403.3,323.5 415.0,320.2 426.7,317.3 435.8,314.0 452.5,306.0 469.2,303.5 485.8,304.0 501.7,303.0 510.0,305.7 526.7,308.0 536.7,312.7 545.0,316.0 553.3,316.3 561.7,315.7 570.0,314.7 578.3,315.2 595.0,316.0 611.7,316.0 620.0,321.0 628.3,323.5 636.7,321.8 645.0,316.0 653.3,310.2 662.5,304.3 670.8,300.7" fill="none" stroke="#1a1a1a" stroke-width="1.1" stroke-linejoin="round" />
<polyline points="15.0,326.0 20.0,331.0 31.7,329.3 38.3,324.3 40.0,322.3" fill="none" stroke="#2a7a9a" stroke-width="0.9" stroke-linejoin="round" />
<polyline points="116.7,322.3 123.3,325.2 135.0,325.9 193.3,326.0" fill="none" stroke="#2a7a9a" stroke-width="0.9" stroke-linejoin="round" />
<polyline points="40.0,322.3 116.7,322.3" fill="none" stroke="#1a1aff" stroke-width="1.1" stroke-linejoin="round" />
<polyline points="193.3,326.0 200.0,326.5 208.3,326.5 223.3,322.3 341.7,322.3" fill="none" stroke="#1a1aff" stroke-width="1.1" stroke-linejoin="round" />
<polyline points="424.0,317.2 427.5,316.8 435.8,316.8 444.2,305.2 460.8,300.7 469.2,300.7 477.5,309.3" fill="none" stroke="#1a1aff" stroke-width="1.1" stroke-linejoin="round" />
<polyline points="528.3,309.3 637.5,309.3 645.8,296.3 670.8,296.3" fill="none" stroke="#1a1aff" stroke-width="1.1" stroke-linejoin="round" />
<polyline points="100.0,330.2 110.0,330.2 116.7,324.3 126.7,322.3 140.8,319.7 143.3,318.5 149.5,309.8 200.3,309.8 208.7,316.0 223.3,317.3 236.7,317.7 245.0,321.8 253.3,328.0 258.3,330.2 292.5,330.2 300.8,334.3 309.2,339.3 317.5,343.5 325.8,343.5 334.2,326.0 342.5,321.8 368.3,322.3 376.7,314.3 385.0,313.0 393.3,311.0 401.7,306.0 410.0,296.8 418.3,296.3 427.5,294.3 435.8,292.7 444.2,279.3 452.5,277.7 460.8,288.0 469.2,288.0 477.5,309.3 528.3,309.3 536.7,343.5 545.0,343.5 553.3,338.5 561.7,327.7 570.0,317.7 578.3,316.8 611.7,316.8 620.0,300.7 636.7,300.7 645.8,279.3 670.8,279.3" fill="none" stroke="#ff1a1a" stroke-width="1.1" stroke-linejoin="round" />
<polyline points="101.7,330.2 108.3,313.5 116.7,291.8 124.2,314.3 132.5,309.3 140.8,297.7 149.7,283.5 158.3,300.7 166.7,292.2 183.3,292.2 191.7,300.7 200.3,292.2 208.7,300.7 217.0,284.3 233.7,249.2 242.0,323.2 250.3,318.5 258.7,352.0 267.0,352.0 275.8,333.5 284.2,309.3 292.5,341.8 300.8,335.2 310.0,349.3 317.5,352.0 325.8,342.7 334.2,307.7 342.5,284.3 351.3,266.7 359.2,289.3 368.3,316.8 376.7,319.3 385.0,314.7 393.3,325.2 401.7,325.2 410.0,317.7 420.0,263.3 426.7,240.8 435.8,232.0 444.2,232.0 452.5,224.2" fill="none" stroke="#8b008b" stroke-width="1.05" stroke-linejoin="round" />
<line x1="124" x2="644" y1="230.8" y2="230.8" stroke="#1450a0" stroke-width="2"/>
<line x1="657" x2="856" y1="230.8" y2="230.8" stroke="#1450a0" stroke-width="2"/>
<rect x="644.3" y="224" width="12.4" height="13" fill="#fff"/>
<rect x="646.6" y="226.6" width="8" height="8" fill="#0a3cc8" stroke="#0a2a70" stroke-width="1.2"/>
</g>
<rect x="19.3" y="126.4" width="105.4" height="21.8" fill="#fff" fill-opacity="0.82" stroke="#eee" stroke-width="0.6"/>
<rect x="145.5" y="126.4" width="89" height="21.8" fill="#fff" fill-opacity="0.82" stroke="#eee" stroke-width="0.6"/>
<rect x="255.8" y="126.4" width="92.7" height="21.8" fill="#fff" fill-opacity="0.82" stroke="#eee" stroke-width="0.6"/>
<rect x="15.5" y="363.5" width="44" height="21.5" fill="#fff" fill-opacity="0.82" stroke="#eee" stroke-width="0.6"/>
<rect x="16.2" y="337" width="129.8" height="14.1" fill="#fff" fill-opacity="0.66"/>
<text x="20.2" y="424" font-size="10.5" fill="#4a4a60">22.3</text>
<line x1="59.6" x2="856.0" y1="380.5" y2="380.5" stroke="#2a2a2a" stroke-width="1"/>
<line x1="14.5" x2="856.0" y1="388.5" y2="388.5" stroke="#1a6e9a" stroke-width="1"/>
<line x1="14.5" x2="856.0" y1="422.5" y2="422.5" stroke="#f41010" stroke-width="1.5"/>
<line x1="14.5" x2="856.0" y1="428.5" y2="428.5" stroke="#2a2a2a" stroke-width="1"/>
<polyline points="15.0,409.5 23.3,407.5 31.7,395.8 40.0,407.5 48.7,409.7 57.0,405.0 65.3,410.8 73.7,402.5 82.5,402.5 90.8,400.5 99.2,400.5 107.5,396.2 115.8,396.2 124.2,391.3 133.0,395.5 141.3,405.3 149.7,408.0 158.0,410.7 166.5,407.5 174.7,407.5 183.0,407.5 191.3,403.3 200.0,403.3 208.3,408.0 216.7,403.3 225.0,399.2 233.7,406.2 242.0,408.3 250.3,415.0 259.0,418.3 267.3,413.0 275.7,416.7 284.0,416.7 292.7,410.3 301.0,410.3 309.0,415.0 318.0,408.3 326.3,408.3 334.7,391.3 343.0,386.7 351.7,399.2 360.0,397.0 368.3,393.0 376.7,389.2 385.3,398.3 393.7,395.3 402.0,395.3 410.3,395.3 418.7,400.8 427.0,396.7 435.7,402.5 444.3,389.7 452.3,385.8 460.7,412.5 469.2,410.0 477.5,417.8 485.8,414.2 494.5,410.8 502.8,404.2 511.3,411.7 519.7,409.3 528.0,411.3 536.3,418.3 544.7,408.7 553.0,401.3 561.7,396.3 570.0,393.7 578.7,400.3 587.0,405.8 595.3,407.3 603.7,405.0 612.3,408.3 620.3,408.3 628.7,405.3 637.3,393.3 645.7,389.5 654.0,387.8 662.3,387.8 670.7,386.2" fill="none" stroke="#1a1a1a" stroke-width="1.15" stroke-linejoin="round" />
<path d="M68.8 222.5H18.5a3 3 0 0 0-3 3v11a3 3 0 0 0 3 3H68.8z" fill="#ebebeb" stroke="#2050c8" stroke-width="1"/>
<path d="M68.8 222.5H121.5a3 3 0 0 1 3 3v11a3 3 0 0 1-3 3H68.8z" fill="#ffcfcf" stroke="#d83030" stroke-width="1"/>
<text x="25.5" y="234.6" font-size="10.4" fill="#1a1a2a">4396.0</text>
<text x="78.3" y="234.6" font-size="10.2" fill="#c82020">− E0,40</text>
<rect x="856.5" y="215.5" width="67.5" height="18" fill="#fff" stroke="#1a1a1a" stroke-width="1.1"/>
<text x="861" y="228.7" font-size="14" fill="#111">4396.4</text>
<text x="862.3" y="138.8" font-size="12" fill="#1a1a28">4401.6</text>
<text x="862.3" y="165.8" font-size="12" fill="#1a1a28">4400.0</text>
<text x="862.3" y="200.3" font-size="12" fill="#1a1a28">4398.0</text>
<text x="862.3" y="268.3" font-size="12" fill="#1a1a28">4394.0</text>
<text x="862.3" y="302.3" font-size="12" fill="#1a1a28">4392.0</text>
<text x="862.3" y="336.3" font-size="12" fill="#1a1a28">4390.0</text>
<text x="862.3" y="382.8" font-size="12" fill="#1a1a28">80</text>
<text x="862.3" y="416.8" font-size="12" fill="#1a1a28">40</text>
<text x="862.3" y="450.8" font-size="12" fill="#1a1a28">0</text>
<text x="57.7" y="458.6" font-size="11" fill="#1a1a28">14:45</text>
<text x="184.7" y="458.6" font-size="11" fill="#1a1a28">15:00</text>
<text x="310.7" y="458.6" font-size="11" fill="#1a1a28">15:15</text>
<text x="436.7" y="458.6" font-size="11" fill="#1a1a28">15:30</text>
<text x="562.7" y="458.6" font-size="11" fill="#1a1a28">15:45</text>
<text x="688.7" y="458.6" font-size="11" fill="#1a1a28">16:00</text>
<text x="814.7" y="458.6" font-size="11" fill="#1a1a28">16:15</text>
<path d="M915.5 269l3.6 4.6h-2.8v8.8h2.8l-3.6 4.6-3.6-4.6h2.8v-8.8h-2.8z" fill="#111"/>
<text x="23.7" y="141.2" font-size="10.5" fill="#3a3a38" stroke="#3a3a38" stroke-width="0.45" letter-spacing="1.5" font-family="DejaVu Sans,Liberation Sans,sans-serif">PIVOT</text>
<text x="68.7" y="141.2" font-size="10.2" fill="#333" font-family="DejaVu Sans,Liberation Sans,sans-serif">Quotidien</text>
<text x="150" y="141.2" font-size="10.5" fill="#3a3a38" stroke="#3a3a38" stroke-width="0.45" letter-spacing="1.2" font-family="DejaVu Sans,Liberation Sans,sans-serif">ICHI</text>
<text x="182.6" y="141.2" font-size="10.2" fill="#333" font-family="DejaVu Sans,Liberation Sans,sans-serif">9</text>
<text x="195.7" y="141.2" font-size="10.2" fill="#333" font-family="DejaVu Sans,Liberation Sans,sans-serif">26</text>
<text x="215.7" y="141.2" font-size="10.2" fill="#333" font-family="DejaVu Sans,Liberation Sans,sans-serif">52</text>
<text x="259.8" y="141.2" font-size="10.5" fill="#3a3a38" stroke="#3a3a38" stroke-width="0.45" letter-spacing="1.4" font-family="DejaVu Sans,Liberation Sans,sans-serif">BOLL</text>
<text x="299.2" y="141.2" font-size="10.2" fill="#d2601e" font-family="DejaVu Sans,Liberation Sans,sans-serif">20</text>
<text x="319.2" y="141.2" font-size="10.2" fill="#d2601e" font-family="DejaVu Sans,Liberation Sans,sans-serif">2.00</text>
<text x="19.9" y="378.2" font-size="10.5" fill="#3a3a38" stroke="#3a3a38" stroke-width="0.45" letter-spacing="1.5" font-family="DejaVu Sans,Liberation Sans,sans-serif">RSI</text>
<text x="47.5" y="378.2" font-size="10.2" fill="#333" font-family="DejaVu Sans,Liberation Sans,sans-serif">9</text>
<text x="22.5" y="347.4" font-size="11" fill="#14142e" font-family="DejaVu Sans,Liberation Sans,sans-serif">Valeur à titre indicatif</text>
</svg>
<div class="abs" style="left:7px;top:460px;width:924px;height:1px;background:#fdfdfb"></div>
<div class="abs" style="left:12px;top:460px;width:1px;height:1px;background:#2a2a2a"></div><div class="abs" style="left:925px;top:460px;width:1px;height:1px;background:#2a2a2a"></div>
<div class="abs" style="left:0;top:461px;width:942px;height:1px;background:#262626"></div>
<div class="abs" style="left:0;top:462px;width:942px;height:1px;background:#b4b4b4"></div>
<div class="abs" style="left:20px;top:462px;width:60px;height:1px;background:#555"></div>
<div class="abs" style="left:21px;top:462px;width:58px;height:1px;background:#fafafa"></div>
</body></html>
